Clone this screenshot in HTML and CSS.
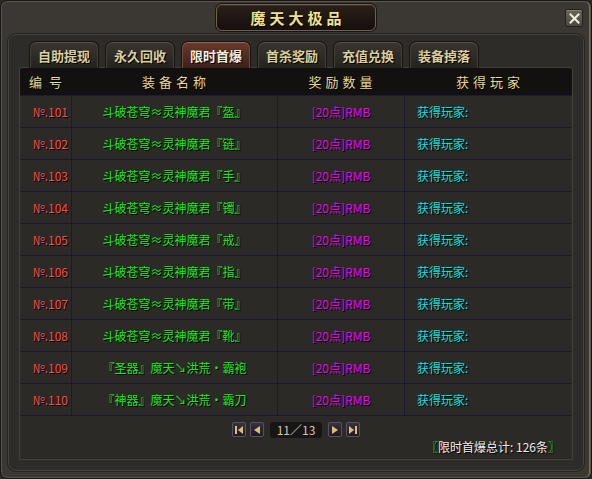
FILE: index.html
```html
<!DOCTYPE html>
<html lang="zh">
<head>
<meta charset="utf-8">
<title>魔天大极品</title>
<link rel="stylesheet" href="styles.css">
</head>
<body>
<div class="window">
  <div class="titlebar">
    <div class="title-plate">魔天大极品</div>
    <div class="close">
      <svg width="11" height="11" viewBox="0 0 11 11"><path d="M1.5 1.5 L9.5 9.5 M9.5 1.5 L1.5 9.5" stroke="#f0ece4" stroke-width="2" stroke-linecap="square"/></svg>
    </div>
  </div>
  <div class="panel">
    <div class="tabs">
      <div class="tab">自助提现</div>
      <div class="tab">永久回收</div>
      <div class="tab active">限时首爆</div>
      <div class="tab">首杀奖励</div>
      <div class="tab">充值兑换</div>
      <div class="tab">装备掉落</div>
    </div>
    <div class="table">
      <div class="thead">
        <div class="h-no">编 号</div>
        <div>装备名称</div>
        <div>奖励数量</div>
        <div>获得玩家</div>
      </div>
      <div class="row"><div class="c-no">№.101</div><div class="c-name">斗破苍穹≈灵神魔君『盔』</div><div class="c-rmb">[20点]RMB</div><div class="c-player">获得玩家:</div></div>
      <div class="row"><div class="c-no">№.102</div><div class="c-name">斗破苍穹≈灵神魔君『链』</div><div class="c-rmb">[20点]RMB</div><div class="c-player">获得玩家:</div></div>
      <div class="row"><div class="c-no">№.103</div><div class="c-name">斗破苍穹≈灵神魔君『手』</div><div class="c-rmb">[20点]RMB</div><div class="c-player">获得玩家:</div></div>
      <div class="row"><div class="c-no">№.104</div><div class="c-name">斗破苍穹≈灵神魔君『镯』</div><div class="c-rmb">[20点]RMB</div><div class="c-player">获得玩家:</div></div>
      <div class="row"><div class="c-no">№.105</div><div class="c-name">斗破苍穹≈灵神魔君『戒』</div><div class="c-rmb">[20点]RMB</div><div class="c-player">获得玩家:</div></div>
      <div class="row"><div class="c-no">№.106</div><div class="c-name">斗破苍穹≈灵神魔君『指』</div><div class="c-rmb">[20点]RMB</div><div class="c-player">获得玩家:</div></div>
      <div class="row"><div class="c-no">№.107</div><div class="c-name">斗破苍穹≈灵神魔君『带』</div><div class="c-rmb">[20点]RMB</div><div class="c-player">获得玩家:</div></div>
      <div class="row"><div class="c-no">№.108</div><div class="c-name">斗破苍穹≈灵神魔君『靴』</div><div class="c-rmb">[20点]RMB</div><div class="c-player">获得玩家:</div></div>
      <div class="row"><div class="c-no">№.109</div><div class="c-name">『圣器』魔天↘洪荒·霸袍</div><div class="c-rmb">[20点]RMB</div><div class="c-player">获得玩家:</div></div>
      <div class="row"><div class="c-no">№.110</div><div class="c-name">『神器』魔天↘洪荒·霸刀</div><div class="c-rmb">[20点]RMB</div><div class="c-player">获得玩家:</div></div>
      <div class="tfoot">
        <div class="pager">
          <div class="pbtn"><svg width="10" height="10" viewBox="0 0 10 10"><rect x="1" y="1" width="2" height="8" fill="#d8c070"/><path d="M9 1 L4 5 L9 9 Z" fill="#d8c070"/></svg></div>
          <div class="pbtn"><svg width="10" height="10" viewBox="0 0 10 10"><path d="M8 1 L2 5 L8 9 Z" fill="#d8c070"/></svg></div>
          <div class="page">11／13</div>
          <div class="pbtn"><svg width="10" height="10" viewBox="0 0 10 10"><path d="M2 1 L8 5 L2 9 Z" fill="#d8c070"/></svg></div>
          <div class="pbtn"><svg width="10" height="10" viewBox="0 0 10 10"><path d="M1 1 L6 5 L1 9 Z" fill="#d8c070"/><rect x="7" y="1" width="2" height="8" fill="#d8c070"/></svg></div>
        </div>
        <div class="total"><span class="br">〖</span>限时首爆总计: 126条<span class="br">〗</span></div>
      </div>
    </div>
  </div>
</div>
</body>
</html>
```
FILE: styles.css
```css
* { box-sizing: border-box; }
html, body { margin: 0; padding: 0; }
body {
  width: 592px;
  height: 479px;
  background: #2a2825;
  font-family: "Noto Sans CJK SC", "Liberation Sans", sans-serif;
  font-size: 12px;
  overflow: hidden;
}
.window {
  position: relative;
  width: 592px;
  height: 479px;
  background: #3b3833;
  border: 1px solid #181614;
  border-radius: 7px;
  box-shadow: inset 0 0 0 1px #5a544b, inset -2px 0 0 #7a6e5c;
}
.titlebar {
  height: 33px;
  display: flex;
  justify-content: center;
  align-items: flex-start;
  padding-top: 3px;
}
.title-plate {
  width: 160px;
  height: 27px;
  background: linear-gradient(#2a201a, #160f0c);
  border: 1px solid #6d6150;
  border-radius: 6px;
  box-shadow: 0 0 0 1px #1a1512, inset 0 1px 0 #3a2e26;
  color: #f2e28a;
  font-weight: bold;
  font-size: 15px;
  letter-spacing: 4px;
  text-indent: 4px;
  display: flex;
  align-items: center;
  justify-content: center;
  text-shadow: 1px 1px 0 #000;
}
.close {
  position: absolute;
  top: 8px;
  left: 564px;
  width: 18px;
  height: 18px;
  background: linear-gradient(#6a645a, #4c473f);
  border: 1px solid #24211d;
  border-radius: 2px;
  box-shadow: inset 0 1px 0 #857e72;
  display: flex;
  align-items: center;
  justify-content: center;
}
.panel {
  margin-left: 7px;
  width: 576px;
  height: 437px;
  background: #2e2c28;
  border: 1px solid #48443d;
  border-radius: 8px;
  box-shadow: 0 0 0 1px #25231f;
  padding: 5px 0 0 10px;
}
.tabs {
  display: flex;
  gap: 6px;
  padding-left: 10px;
  height: 28px;
  align-items: flex-end;
  margin-bottom: -1px;
}
.tab {
  width: 70px;
  height: 27px;
  border: 1px solid #15120f;
  border-bottom: none;
  border-radius: 7px 7px 0 0;
  background: linear-gradient(#3a3530, #25221e);
  box-shadow: inset 0 1px 0 #5c5246, inset 1px 0 0 #453e35, inset -1px 0 0 #453e35;
  color: #dccf9a;
  font-weight: bold;
  font-size: 13px;
  display: flex;
  align-items: center;
  justify-content: center;
  text-shadow: 1px 1px 0 #000;
}
.tab.active {
  background: linear-gradient(#6a3a2e, #3a2019);
  box-shadow: inset 0 1px 0 #9a6450, inset 1px 0 0 #7a4a3a, inset -1px 0 0 #7a4a3a;
  color: #f6eedc;
}
.table {
  width: 554px;
  height: 393px;
  border: 1px solid #45413a;
  border-radius: 4px 4px 0 0;
  background: #2b2a26;
  display: flex;
  flex-direction: column;
}
.thead, .row {
  display: grid;
  grid-template-columns: 51px 206px 127px 168px;
}
.thead {
  height: 28px;
  background: #121110;
  border-bottom: 1px solid #1e1c34;
  border-radius: 3px 3px 0 0;
  color: #e8d890;
  font-size: 13px;
  letter-spacing: 4px;
  text-shadow: 1px 1px 0 #000;
}
.thead > div {
  display: flex;
  align-items: center;
  justify-content: center;
  text-indent: 4px;
}
.thead > .h-no {
  white-space: pre;
  letter-spacing: 2px;
  text-indent: 2px;
}
.row {
  height: 32px;
  border-bottom: 1px solid #1c1a2e;
}
.row > div {
  display: flex;
  align-items: center;
  text-shadow: 1px 1px 0 #000;
}
.row > div + div { border-left: 1px solid #1c1a2e; }
.c-no {
  justify-content: flex-end;
  padding-right: 3px;
  color: #ff4a4a;
}
.c-name {
  justify-content: center;
  color: #1ee81e;
}
.c-rmb {
  justify-content: center;
  color: #f000f0;
}
.c-player {
  padding-left: 12px;
  color: #10e0e0;
}
.tfoot {
  flex: 1;
  display: flex;
  flex-direction: column;
  padding-top: 6px;
}
.pager {
  display: flex;
  justify-content: center;
  align-items: center;
  gap: 4px;
  height: 15px;
}
.pbtn {
  width: 14px;
  height: 15px;
  background: linear-gradient(#3a3040, #1e1a24);
  border: 1px solid #5a5064;
  border-radius: 2px;
  display: flex;
  align-items: center;
  justify-content: center;
}
.page {
  width: 52px;
  height: 16px;
  margin: 0 2px;
  background: #181614;
  border-radius: 3px;
  color: #cfc6ae;
  font-family: "Noto Sans CJK SC", sans-serif;
  font-size: 12px;
  display: flex;
  align-items: center;
  justify-content: center;
}
.total {
  margin-top: 3px;
  align-self: flex-end;
  padding-right: 12px;
  color: #eeeeee;
  line-height: 14px;
  text-shadow: 1px 1px 0 #000;
}
.br { color: #1ee81e; }
```
